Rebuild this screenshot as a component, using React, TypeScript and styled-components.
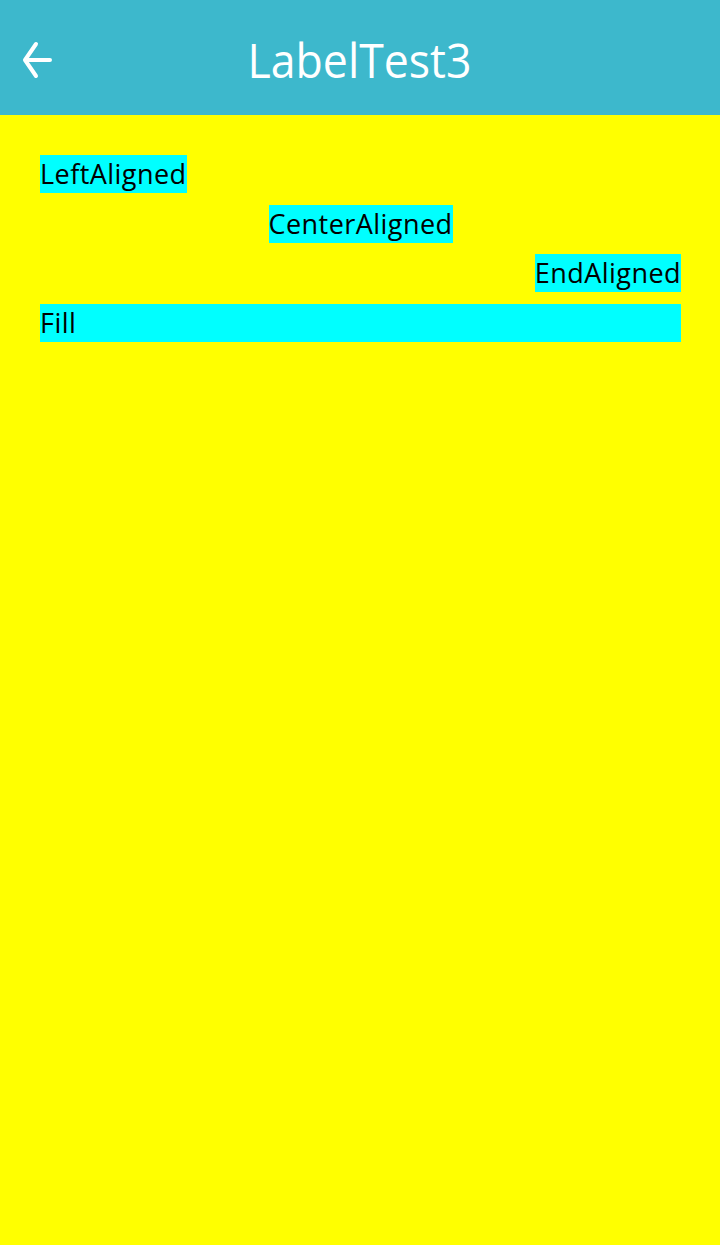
import React from "react";
import styled, { createGlobalStyle } from "styled-components";

const Global = createGlobalStyle`
  html, body { margin: 0; padding: 0; background: #ffff00; }
  body { font-family: "Open Sans", "Noto Sans", sans-serif; }
`;

const Page = styled.div`
  width: 720px;
  height: 1245px;
  background: #ffff00;
  display: flex;
  flex-direction: column;
`;

const Header = styled.header`
  box-sizing: border-box;
  height: 115px;
  padding-top: 5px;
  background: #3db8cc;
  display: grid;
  grid-template-columns: 1fr auto 1fr;
  align-items: center;
`;

const BackButton = styled.button`
  justify-self: start;
  margin-left: 21px;
  width: 34px;
  height: 40px;
  padding: 0;
  border: 0;
  background: transparent;
  display: flex;
  align-items: center;
  justify-content: center;
`;

const Title = styled.h1`
  margin: 0 0 0 -2px;
  color: #ffffff;
  font-family: "Open Sans", sans-serif;
  font-weight: 400;
  font-size: 48px;
  letter-spacing: 0;
  transform: scaleX(0.93);
  line-height: 1;
`;

const Content = styled.main`
  display: flex;
  flex-direction: column;
  gap: 11.6px;
  padding: 40px 39px 0 40px;
`;

const Row = styled.div<{ $align: "start" | "center" | "end" | "stretch" }>`
  display: flex;
  justify-content: ${(p) =>
    p.$align === "stretch"
      ? "stretch"
      : p.$align === "start"
      ? "flex-start"
      : p.$align === "end"
      ? "flex-end"
      : "center"};
`;

const Label = styled.span<{ $fill?: boolean }>`
  background: #00ffff;
  color: #000;
  font-family: "Open Sans", sans-serif;
  font-size: 27px;
  line-height: 38px;
  height: 38px;
  letter-spacing: 0.45px;
  flex: ${(p) => (p.$fill ? "1 1 auto" : "0 0 auto")};
`;

export default function App() {
  return (
    <Page>
      <Global />
      <Header>
        <BackButton aria-label="Back">
          <svg width="34" height="40" viewBox="0 0 34 40" fill="none">
            <path
              d="M29 20H5M15 4L4 20l11 16"
              stroke="#fff"
              strokeWidth="4"
              strokeLinecap="round"
              strokeLinejoin="round"
            />
          </svg>
        </BackButton>
        <Title>LabelTest3</Title>
        <span />
      </Header>
      <Content>
        <Row $align="start">
          <Label>LeftAligned</Label>
        </Row>
        <Row $align="center">
          <Label>CenterAligned</Label>
        </Row>
        <Row $align="end">
          <Label>EndAligned</Label>
        </Row>
        <Row $align="stretch">
          <Label $fill>Fill</Label>
        </Row>
      </Content>
    </Page>
  );
}
